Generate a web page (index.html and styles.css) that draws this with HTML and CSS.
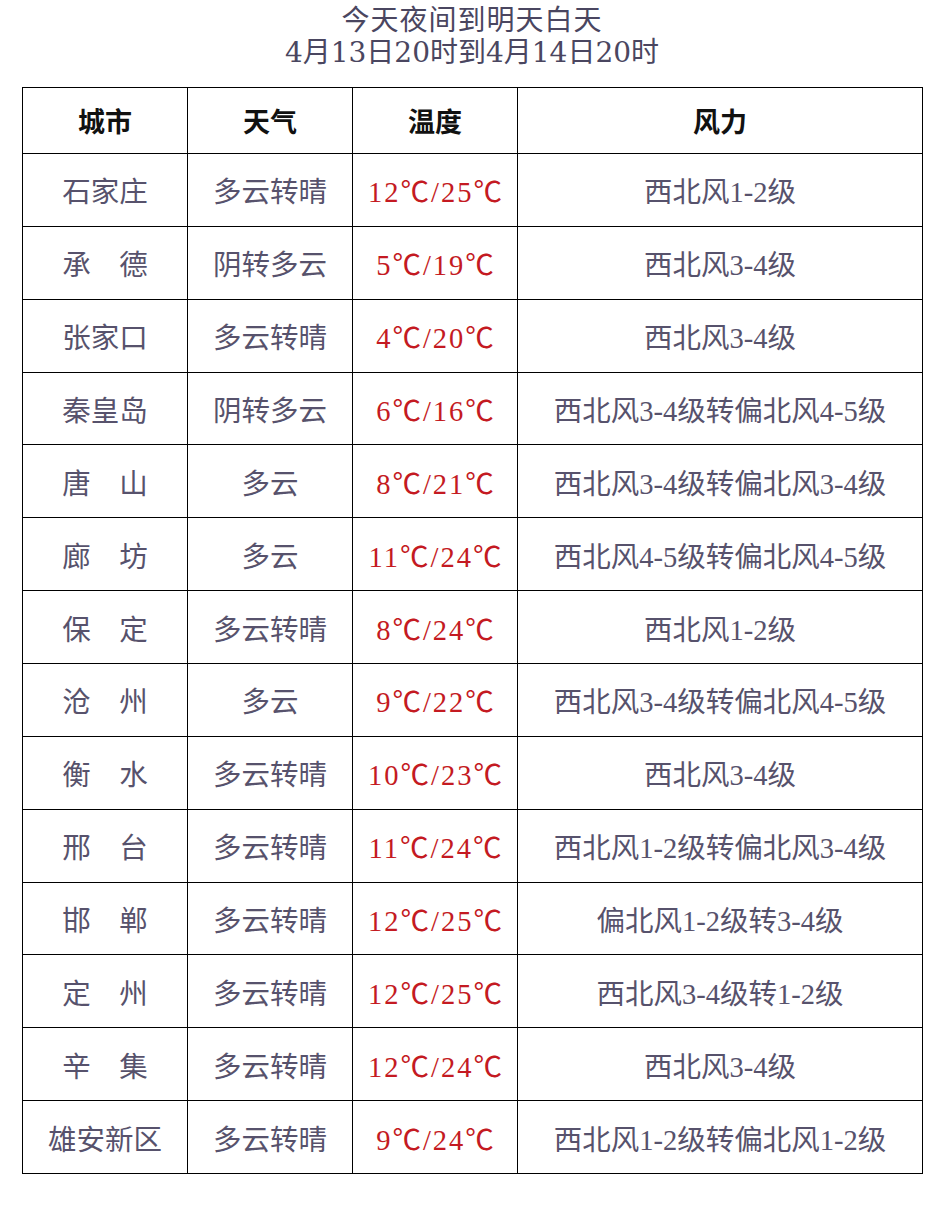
FILE: index.html
```html
<!DOCTYPE html>
<html lang="zh-CN">
<head>
<meta charset="utf-8">
<title>天气预报</title>
<link rel="stylesheet" href="styles.css">
</head>
<body>
<div class="page">
  <h1 class="title">
    <span class="title-main">今天夜间到明天白天</span>
    <span class="title-sub">4月13日20时到4月14日20时</span>
  </h1>
  <table class="wx">
    <colgroup>
      <col class="c1"><col class="c2"><col class="c3"><col class="c4">
    </colgroup>
    <thead>
      <tr><th>城市</th><th>天气</th><th>温度</th><th>风力</th></tr>
    </thead>
    <tbody>
      <tr><td>石家庄</td><td>多云转晴</td><td class="t">12℃/25℃</td><td>西北风1-2级</td></tr>
      <tr><td>承　德</td><td>阴转多云</td><td class="t">5℃/19℃</td><td>西北风3-4级</td></tr>
      <tr><td>张家口</td><td>多云转晴</td><td class="t">4℃/20℃</td><td>西北风3-4级</td></tr>
      <tr><td>秦皇岛</td><td>阴转多云</td><td class="t">6℃/16℃</td><td>西北风3-4级转偏北风4-5级</td></tr>
      <tr><td>唐　山</td><td>多云</td><td class="t">8℃/21℃</td><td>西北风3-4级转偏北风3-4级</td></tr>
      <tr><td>廊　坊</td><td>多云</td><td class="t">11℃/24℃</td><td>西北风4-5级转偏北风4-5级</td></tr>
      <tr><td>保　定</td><td>多云转晴</td><td class="t">8℃/24℃</td><td>西北风1-2级</td></tr>
      <tr><td>沧　州</td><td>多云</td><td class="t">9℃/22℃</td><td>西北风3-4级转偏北风4-5级</td></tr>
      <tr><td>衡　水</td><td>多云转晴</td><td class="t">10℃/23℃</td><td>西北风3-4级</td></tr>
      <tr><td>邢　台</td><td>多云转晴</td><td class="t">11℃/24℃</td><td>西北风1-2级转偏北风3-4级</td></tr>
      <tr><td>邯　郸</td><td>多云转晴</td><td class="t">12℃/25℃</td><td>偏北风1-2级转3-4级</td></tr>
      <tr><td>定　州</td><td>多云转晴</td><td class="t">12℃/25℃</td><td>西北风3-4级转1-2级</td></tr>
      <tr><td>辛　集</td><td>多云转晴</td><td class="t">12℃/24℃</td><td>西北风3-4级</td></tr>
      <tr><td>雄安新区</td><td>多云转晴</td><td class="t">9℃/24℃</td><td>西北风1-2级转偏北风1-2级</td></tr>
    </tbody>
  </table>
</div>
</body>
</html>
```

FILE: styles.css
```css
html, body {
  margin: 0;
  padding: 0;
  background: #ffffff;
}

.page {
  padding: 5px 20px 0 22px;
  font-family: "Liberation Serif", "Noto Sans CJK SC", serif;
}

.title {
  margin: 0 0 18px 0;
  display: flex;
  flex-direction: column;
  align-items: center;
  font-weight: normal;
  font-size: 28px;
  line-height: 32px;
  color: #4a4660;
}

.title-main {
  font-family: "Liberation Serif", "Noto Sans CJK SC", serif;
  letter-spacing: 1px;
}

.title-sub {
  font-family: "DejaVu Serif", "Noto Sans CJK SC", serif;
}

.wx {
  width: 900px;
  border-collapse: collapse;
  table-layout: fixed;
}

.c1, .c2, .c3 { width: 165px; }
.c4 { width: 405px; }

.wx th,
.wx td {
  border: 1px solid #000;
  padding: 0;
  text-align: center;
  vertical-align: middle;
  font-size: 28.5px;
  white-space: nowrap;
}

.wx thead tr { height: 66px; }
.wx tbody tr { height: 72.86px; }

.wx th {
  font-size: 27px;
  font-weight: bold;
  color: #111;
}

.wx td {
  color: #57526c;
}

.wx td.t {
  color: #c41a22;
  letter-spacing: 2px;
  text-indent: 2px;
}
```
